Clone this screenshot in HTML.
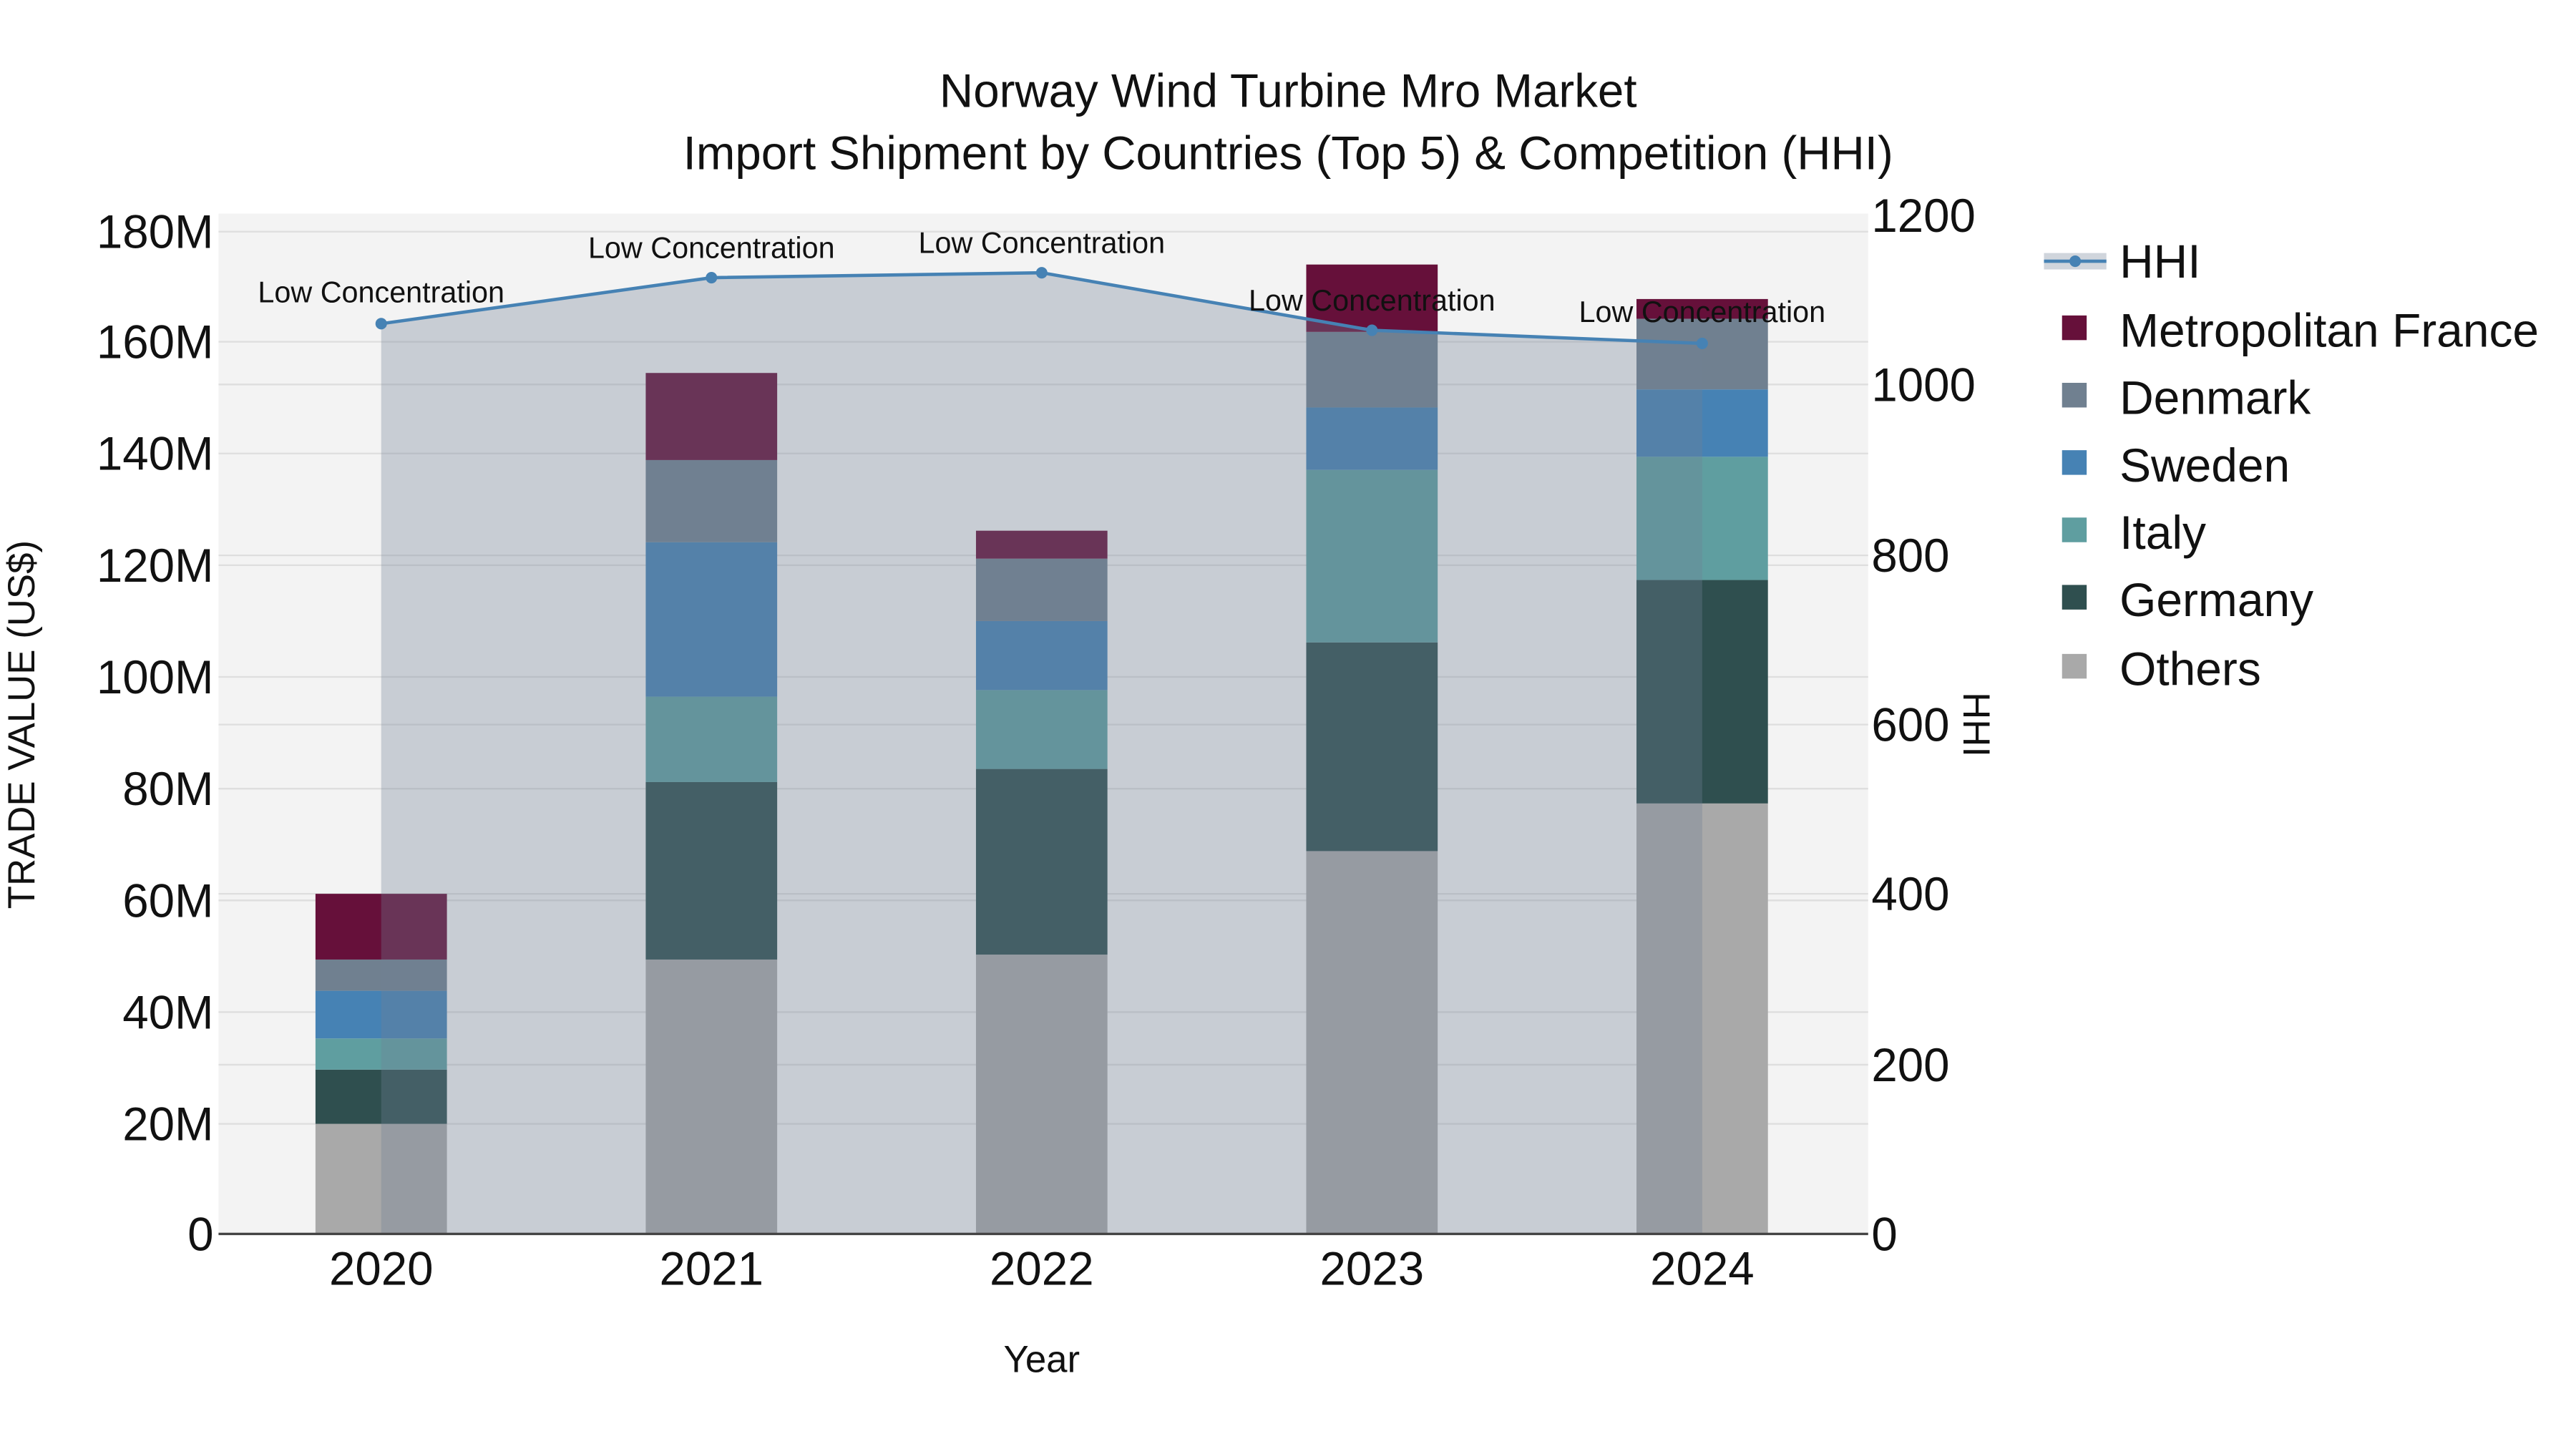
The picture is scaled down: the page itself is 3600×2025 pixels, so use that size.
<!DOCTYPE html>
<html><head><meta charset="utf-8"><style>
html,body{margin:0;padding:0;background:#fff;}
svg{display:block;font-family:"Liberation Sans",sans-serif;}
</style></head><body>
<svg width="3600" height="2025" viewBox="0 0 1567.8 881.9" xmlns="http://www.w3.org/2000/svg">
<rect x="0" y="0" width="1600" height="900" fill="#fff"/>
<rect x="133" y="130" width="1004" height="621" fill="#f3f3f3"/>
<g stroke="#dedede" stroke-width="1">
<line x1="133" x2="1137" y1="684" y2="684"/><line x1="133" x2="1137" y1="616" y2="616"/>
<line x1="133" x2="1137" y1="548" y2="548"/><line x1="133" x2="1137" y1="480" y2="480"/>
<line x1="133" x2="1137" y1="412" y2="412"/><line x1="133" x2="1137" y1="344" y2="344"/>
<line x1="133" x2="1137" y1="276" y2="276"/><line x1="133" x2="1137" y1="208" y2="208"/>
<line x1="133" x2="1137" y1="141" y2="141"/>
<line x1="133" x2="1137" y1="648" y2="648"/><line x1="133" x2="1137" y1="544" y2="544"/>
<line x1="133" x2="1137" y1="441" y2="441"/><line x1="133" x2="1137" y1="338" y2="338"/>
<line x1="133" x2="1137" y1="234" y2="234"/>
</g>
<g>
<rect x="192" y="684" width="80" height="67" fill="#a9a9a9"/>
<rect x="192" y="651" width="80" height="33" fill="#2f4f4f"/>
<rect x="192" y="632" width="80" height="19" fill="#5f9ea0"/>
<rect x="192" y="603" width="80" height="29" fill="#4682b4"/>
<rect x="192" y="584" width="80" height="19" fill="#708090"/>
<rect x="192" y="544" width="80" height="40" fill="#66103a"/>

<rect x="393" y="584" width="80" height="167" fill="#a9a9a9"/>
<rect x="393" y="476" width="80" height="108" fill="#2f4f4f"/>
<rect x="393" y="424" width="80" height="52" fill="#5f9ea0"/>
<rect x="393" y="330" width="80" height="94" fill="#4682b4"/>
<rect x="393" y="280" width="80" height="50" fill="#708090"/>
<rect x="393" y="227" width="80" height="53" fill="#66103a"/>

<rect x="594" y="581" width="80" height="170" fill="#a9a9a9"/>
<rect x="594" y="468" width="80" height="113" fill="#2f4f4f"/>
<rect x="594" y="420" width="80" height="48" fill="#5f9ea0"/>
<rect x="594" y="378" width="80" height="42" fill="#4682b4"/>
<rect x="594" y="340" width="80" height="38" fill="#708090"/>
<rect x="594" y="323" width="80" height="17" fill="#66103a"/>

<rect x="795" y="518" width="80" height="233" fill="#a9a9a9"/>
<rect x="795" y="391" width="80" height="127" fill="#2f4f4f"/>
<rect x="795" y="286" width="80" height="105" fill="#5f9ea0"/>
<rect x="795" y="248" width="80" height="38" fill="#4682b4"/>
<rect x="795" y="202" width="80" height="46" fill="#708090"/>
<rect x="795" y="161" width="80" height="41" fill="#66103a"/>

<rect x="996" y="489" width="80" height="262" fill="#a9a9a9"/>
<rect x="996" y="353" width="80" height="136" fill="#2f4f4f"/>
<rect x="996" y="278" width="80" height="75" fill="#5f9ea0"/>
<rect x="996" y="237" width="80" height="41" fill="#4682b4"/>
<rect x="996" y="194" width="80" height="43" fill="#708090"/>
<rect x="996" y="182" width="80" height="12" fill="#66103a"/>
</g>
<polygon points="232,751 232,197 433,169 634,166 835,201 1036,209 1036,751" fill="rgba(112,128,148,0.33)"/>
<polyline points="232,197 433,169 634,166 835,201 1036,209" fill="none" stroke="#4682b4" stroke-width="2"/>
<g fill="#4682b4"><circle cx="232" cy="197" r="3.5"/><circle cx="433" cy="169" r="3.5"/><circle cx="634" cy="166" r="3.5"/><circle cx="835" cy="201" r="3.5"/><circle cx="1036" cy="209" r="3.5"/></g>
<g font-size="18" fill="#111" text-anchor="middle">
<text x="232" y="184">Low Concentration</text>
<text x="433" y="157">Low Concentration</text>
<text x="634" y="154">Low Concentration</text>
<text x="835" y="189">Low Concentration</text>
<text x="1036" y="196">Low Concentration</text>
</g>
<line x1="133" x2="1137" y1="751" y2="751" stroke="#444" stroke-width="1.5"/>
<g font-size="28.5" fill="#111" text-anchor="end">
<text x="130" y="761">0</text><text x="130" y="694">20M</text><text x="130" y="626">40M</text>
<text x="130" y="558">60M</text><text x="130" y="490">80M</text><text x="130" y="422">100M</text>
<text x="130" y="354">120M</text><text x="130" y="286">140M</text><text x="130" y="218">160M</text>
<text x="130" y="151">180M</text>
</g>
<g font-size="28.5" fill="#111" text-anchor="start">
<text x="1139" y="761">0</text><text x="1139" y="658">200</text><text x="1139" y="554">400</text>
<text x="1139" y="451">600</text><text x="1139" y="348">800</text><text x="1139" y="244">1000</text>
<text x="1139" y="141">1200</text>
</g>
<g font-size="28.5" fill="#111" text-anchor="middle">
<text x="232" y="782">2020</text><text x="433" y="782">2021</text><text x="634" y="782">2022</text>
<text x="835" y="782">2023</text><text x="1036" y="782">2024</text>
</g>
<text x="634" y="835" font-size="23" text-anchor="middle" fill="#111">Year</text>
<text transform="translate(21,441) rotate(-90)" font-size="23" text-anchor="middle" fill="#111">TRADE VALUE (US$)</text>
<text transform="translate(1195,441) rotate(90)" font-size="23" text-anchor="middle" fill="#111">HHI</text>
<text x="784" y="65" font-size="28.5" text-anchor="middle" fill="#111">Norway Wind Turbine Mro Market</text>
<text x="784" y="103" font-size="28.5" text-anchor="middle" fill="#111">Import Shipment by Countries (Top 5) &amp; Competition (HHI)</text>
<rect x="1244" y="154" width="38" height="10" fill="rgba(112,128,148,0.33)"/>
<line x1="1244" x2="1282" y1="159" y2="159" stroke="#4682b4" stroke-width="2"/>
<circle cx="1263" cy="159" r="3.5" fill="#4682b4"/>
<g font-size="28.7" fill="#111">
<text x="1290" y="169">HHI</text>
<text x="1290" y="211">Metropolitan France</text>
<text x="1290" y="252">Denmark</text>
<text x="1290" y="293">Sweden</text>
<text x="1290" y="334">Italy</text>
<text x="1290" y="375">Germany</text>
<text x="1290" y="417">Others</text>
</g>
<rect x="1255" y="192" width="15" height="15" fill="#66103a"/>
<rect x="1255" y="233" width="15" height="15" fill="#708090"/>
<rect x="1255" y="274" width="15" height="15" fill="#4682b4"/>
<rect x="1255" y="315" width="15" height="15" fill="#5f9ea0"/>
<rect x="1255" y="356" width="15" height="15" fill="#2f4f4f"/>
<rect x="1255" y="398" width="15" height="15" fill="#a9a9a9"/>
</svg>
</body></html>
